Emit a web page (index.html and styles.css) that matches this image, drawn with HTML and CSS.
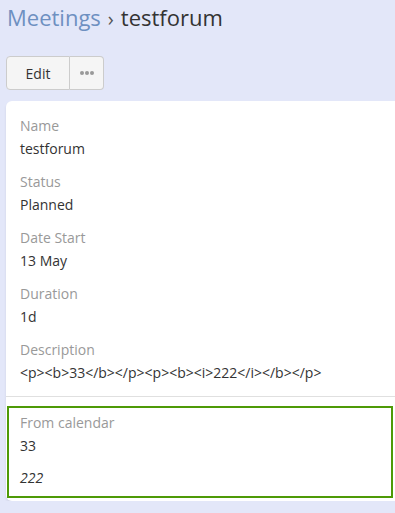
FILE: index.html
```html
<!DOCTYPE html>
<html>
<head>
<meta charset="utf-8">
<link rel="stylesheet" href="styles.css">
</head>
<body>
<div class="page">
  <h1 class="header"><a class="crumb" href="#">Meetings</a><span class="sep">›</span><span class="current">testforum</span></h1>
  <div class="btn-group">
    <button class="btn btn-edit">Edit</button>
    <button class="btn btn-more"><span class="dot"></span><span class="dot"></span><span class="dot"></span></button>
  </div>
  <div class="card">
    <div class="fields">
      <div class="field"><div class="label">Name</div><div class="value">testforum</div></div>
      <div class="field"><div class="label">Status</div><div class="value">Planned</div></div>
      <div class="field"><div class="label">Date Start</div><div class="value">13 May</div></div>
      <div class="field"><div class="label">Duration</div><div class="value">1d</div></div>
      <div class="field last"><div class="label">Description</div><div class="value">&lt;p&gt;&lt;b&gt;33&lt;/b&gt;&lt;/p&gt;&lt;p&gt;&lt;b&gt;&lt;i&gt;222&lt;/i&gt;&lt;/b&gt;&lt;/p&gt;</div></div>
    </div>
    <div class="calendar">
      <div class="label">From calendar</div>
      <p class="cal-p">33</p>
      <p class="cal-p"><i>222</i></p>
    </div>
  </div>
</div>
</body>
</html>
```
FILE: styles.css
```css
html, body {
  margin: 0;
  padding: 0;
  background: #e3e7f9;
  overflow: hidden;
  font-family: "Open Sans", "Liberation Sans", sans-serif;
  font-size: 14px;
  color: #333;
}
.page {
  padding: 2px 0 0 6px;
}
.header {
  margin: 0;
  font-size: 22px;
  line-height: 31px;
  height: 31px;
  font-weight: normal;
  padding-left: 1px;
  display: flex;
  align-items: baseline;
}
.crumb {
  color: #6e90c1;
  text-decoration: none;
}
.sep {
  color: #555;
  margin: 0 7px 0 7px;
  font-size: 20px;
}
.current {
  color: #333;
}
.btn-group {
  display: flex;
  margin-top: 23px;
  width: max-content;
}
.btn {
  font-family: inherit;
  font-size: 14px;
  color: #333;
  background: #f5f5f5;
  border: 1px solid #ccc;
  height: 34px;
  margin: 0;
  padding: 0;
  display: flex;
  align-items: center;
  justify-content: center;
}
.btn-edit {
  width: 64px;
  border-radius: 4px 0 0 4px;
  padding-top: 1px;
}
.btn-more {
  width: 34px;
  border-left: none;
  border-radius: 0 4px 4px 0;
  gap: 1px;
}
.dot {
  width: 4px;
  height: 4px;
  border-radius: 50%;
  background: #999;
}
.card {
  margin-top: 11px;
  width: 400px;
  background: #fff;
  border-radius: 6px 0 0 6px;
  box-shadow: 0 2px 3px rgba(0,0,0,0.08);
  padding-bottom: 3px;
}
.fields {
  padding: 15px 14px 13px;
  border-bottom: 1px solid #e0e0e0;
}
.field {
  margin-bottom: 13px;
}
.field.last {
  margin-bottom: 0;
}
.label {
  color: #999;
  line-height: 20px;
  margin-bottom: 3px;
}
.value {
  line-height: 20px;
}
.calendar {
  box-sizing: border-box;
  margin: 9px 0 0 1px;
  width: 386px;
  border: 2px solid #4e9a06;
  padding: 5px 0 8px 11px;
}
.calendar .label {
  margin-bottom: 3px;
}
.cal-p {
  margin: 0 0 12px;
  line-height: 20px;
}
.cal-p:last-child {
  margin-bottom: 0;
}
```
